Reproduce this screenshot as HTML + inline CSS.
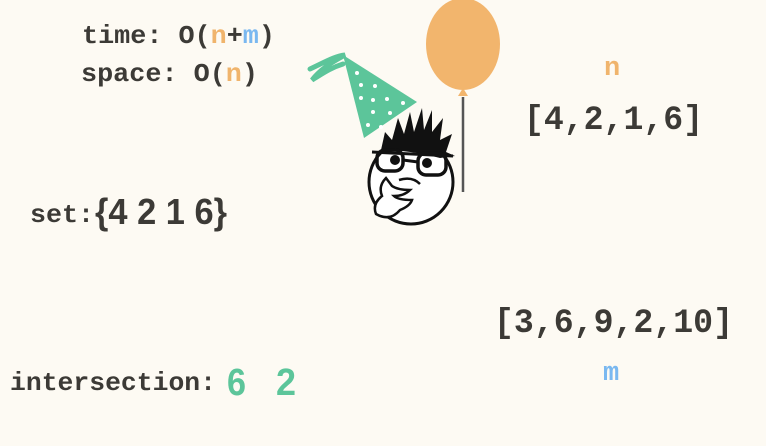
<!DOCTYPE html>
<html><head><meta charset="utf-8"><style>
html,body{margin:0;padding:0;background:#fdfaf3;}
svg{display:block}
text{font-family:"Liberation Mono",monospace;font-weight:bold;fill:#3c3a36}
</style></head><body>
<svg width="766" height="446" viewBox="0 0 766 446" xmlns="http://www.w3.org/2000/svg">
<rect width="766" height="446" fill="#fdfaf3"/>
<text x="82" y="43" font-size="26" textLength="193" lengthAdjust="spacingAndGlyphs">time: O(<tspan style="fill:#f0b46c">n</tspan>+<tspan style="fill:#7ab8f0">m</tspan>)</text>
<text x="81" y="81" font-size="26" textLength="177" lengthAdjust="spacingAndGlyphs">space: O(<tspan style="fill:#f0b46c">n</tspan>)</text>
<text x="30" y="222" font-size="26" textLength="64" lengthAdjust="spacingAndGlyphs">set:</text>
<text x="95" y="224" font-size="36" style="font-family:'Liberation Sans',sans-serif" textLength="132" lengthAdjust="spacingAndGlyphs">{4 2 1 6}</text>
<text x="604" y="75" font-size="27" style="fill:#f0b46c">n</text>
<text x="524" y="129" font-size="34" textLength="179" lengthAdjust="spacingAndGlyphs">[4,2,1,6]</text>
<text x="494" y="332" font-size="34" textLength="239" lengthAdjust="spacingAndGlyphs">[3,6,9,2,10]</text>
<text x="603" y="380" font-size="27" style="fill:#7ab8f0">m</text>
<text x="10" y="390" font-size="26" textLength="206" lengthAdjust="spacingAndGlyphs">intersection:</text>
<text x="227" y="395" font-size="38" style="fill:#5cc59a;font-family:'Liberation Sans',sans-serif" textLength="19" lengthAdjust="spacingAndGlyphs">6</text>
<text x="276" y="395" font-size="38" style="fill:#5cc59a;font-family:'Liberation Sans',sans-serif" textLength="20" lengthAdjust="spacingAndGlyphs">2</text>
<!-- balloon -->
<ellipse cx="463" cy="44" rx="37" ry="46" fill="#f2b56d"/>
<path d="M458 96 L463 88 L468 96 Z" fill="#f2b56d"/>
<line x1="463" y1="97" x2="463" y2="192" stroke="#555" stroke-width="2.5"/>
<!-- hat -->
<path d="M310 69 C325 62 335 56 345 55 C330 63 320 70 312 80 C322 74 330 68 343 64" fill="none" stroke="#5cc59a" stroke-width="5" stroke-linecap="round"/>
<path d="M343 55 L417 102 L364 138 Z" fill="#5cc59a"/>
<g fill="#fff">
<circle cx="357" cy="73" r="2"/><circle cx="361" cy="85" r="2"/><circle cx="375" cy="86" r="2"/>
<circle cx="361" cy="98" r="2"/><circle cx="373" cy="100" r="2"/><circle cx="387" cy="99" r="2"/><circle cx="403" cy="103" r="2"/>
<circle cx="373" cy="112" r="2"/><circle cx="390" cy="113" r="2"/><circle cx="368" cy="125" r="2"/><circle cx="381" cy="127" r="2"/>
</g>
<!-- head -->
<circle cx="411" cy="182" r="42" fill="#fff" stroke="#111" stroke-width="3"/>
<path d="M381 150 L385 132 L392 140 L398 118 L404 134 L410 112 L414 132 L422 108 L424 130 L432 110 L432 132 L443 118 L440 140 L452 134 L446 152 L455 156 L440 158 Q410 150 381 150 Z" fill="#111"/>
<path d="M372 152 L453 156" stroke="#111" stroke-width="3"/>
<rect x="377" y="150" width="26" height="21" rx="8" fill="none" stroke="#111" stroke-width="3.5"/>
<rect x="418" y="153" width="28" height="22" rx="8" fill="none" stroke="#111" stroke-width="3.5"/>
<path d="M403 160 L418 162" stroke="#111" stroke-width="3"/>
<circle cx="395" cy="160" r="5" fill="#111"/><circle cx="427" cy="163" r="5" fill="#111"/>
<path d="M399 180 Q412 176 420 184" fill="none" stroke="#111" stroke-width="2.5"/>
<path d="M386 178 Q378 186 382 196 Q372 204 376 214 Q390 222 400 210 Q410 206 412 200 Q398 200 394 196 Q404 196 410 190 Q398 190 392 186 Z" fill="#fff" stroke="#111" stroke-width="2.5"/>
</svg>
</body></html>
